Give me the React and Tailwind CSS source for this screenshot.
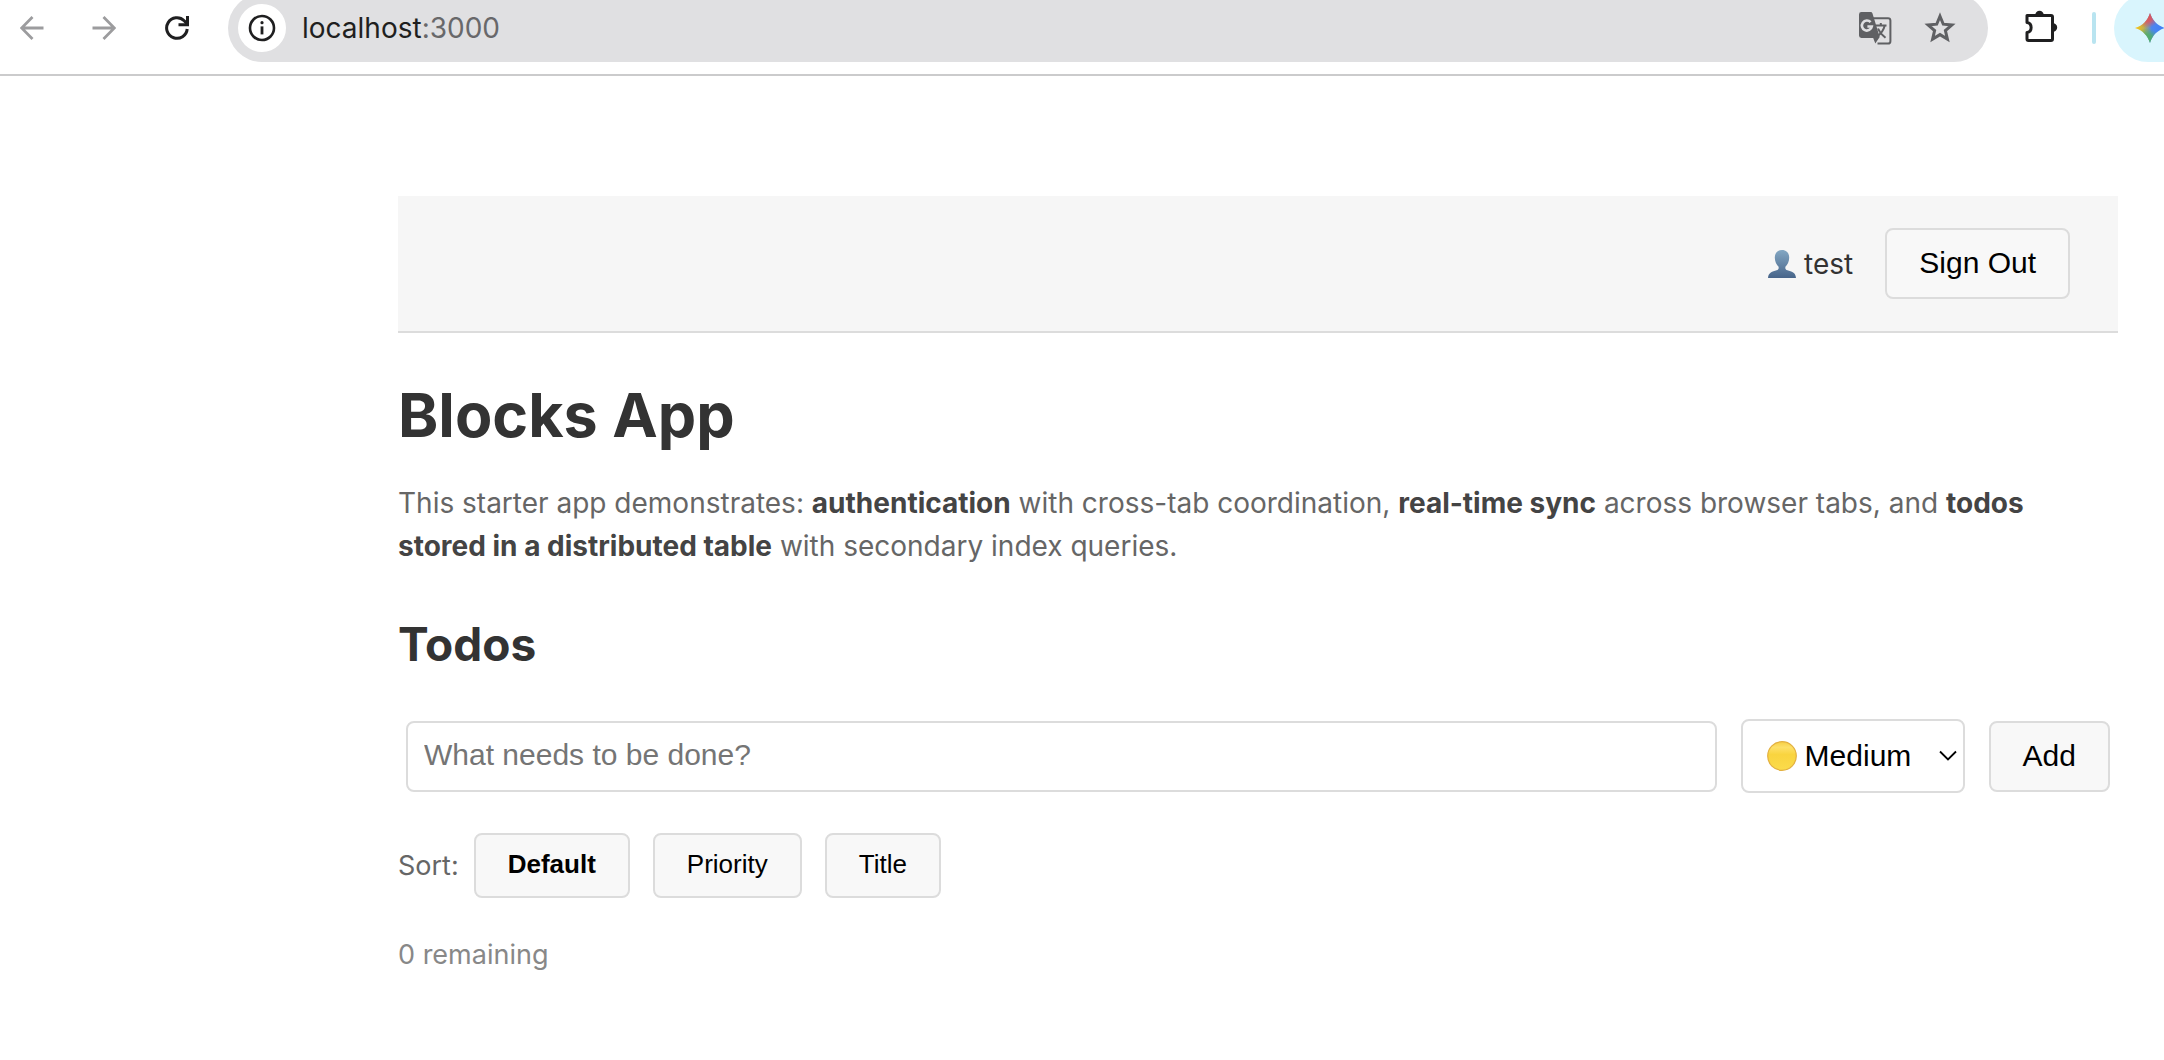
import React, { useState } from "react";

const ui = "font-['Inter',sans-serif]";
const arial = "font-['Liberation_Sans',sans-serif]";

function BackIcon() {
  return (
    <svg width="24" height="24" viewBox="0 0 24 24" fill="none" stroke="currentColor" strokeWidth="2.8">
      <path d="M23.5 12H2M12.5 1 1.6 12l10.9 11" />
    </svg>
  );
}

function ForwardIcon() {
  return (
    <svg width="24" height="24" viewBox="0 0 24 24" fill="none" stroke="currentColor" strokeWidth="2.8">
      <path d="M.5 12H22M11.5 1l10.9 11-10.9 11" />
    </svg>
  );
}

function ReloadIcon() {
  return (
    <svg width="26" height="26" viewBox="0 0 26 26" fill="none" stroke="currentColor" strokeWidth="3">
      <path d="M23.2 14a10.3 10.3 0 1 1-3-8.3L23 8.6" />
      <path d="M23.5 1v8.7h-9" />
    </svg>
  );
}

function InfoIcon() {
  return (
    <svg width="28" height="28" viewBox="0 0 28 28" fill="none">
      <circle cx="14" cy="14" r="12" stroke="currentColor" strokeWidth="2.6" />
      <path d="M14 12.4v8" stroke="currentColor" strokeWidth="2.8" />
      <circle cx="14" cy="8.7" r="1.6" fill="currentColor" />
    </svg>
  );
}

function TranslateIcon() {
  return (
    <svg width="34" height="34" viewBox="0 0 34 34" fill="none">
      <path d="M14 7.2h16a2.4 2.4 0 0 1 2.4 2.4v20.6a2.4 2.4 0 0 1-2.4 2.4H19.5" stroke="#5f6063" strokeWidth="2" />
      <path d="M3.4 1h9.2a2 2 0 0 1 1.9 1.4L21.7 26l-4.4 6.6L15.2 27H3.4A2.4 2.4 0 0 1 1 24.6V3.4A2.4 2.4 0 0 1 3.4 1Z" fill="#5f6063" />
      <path d="M12.6 11.2a5 5 0 1 0 1.2 4.3H9.400" stroke="#e0e0e2" strokeWidth="2.6" />
      <path d="M17.5 14.5h11M22.8 12v2.5M26.7 14.8c-1.2 4.600-4 8-7 10M20 17.5c1.5 3.8 4 6.500 7.5 9.300" stroke="#5f6063" strokeWidth="2" />
    </svg>
  );
}

function StarIcon() {
  return (
    <svg width="32" height="32" viewBox="0 0 32 32" fill="none" stroke="#5f6063" strokeWidth="3">
      <path d="m16 4.2 3.300 8 8.600.7-6.500 5.700 2 8.500-7.400-4.500-7.400 4.500 2-8.500-6.500-5.700 8.600-.7Z" />
    </svg>
  );
}

function PuzzleIcon() {
  return (
    <svg width="34" height="34" viewBox="0 0 34 34" fill="none">
      <path
        d="M3 6.500h24a1.500 1.500 0 0 1 1.500 1.500v22a1.500 1.500 0 0 1-1.500 1.500H4.500A1.500 1.500 0 0 1 3 30v-6.500c5.500-.8 5.500-9.200 0-10Z"
        stroke="#1f1f20"
        strokeWidth="3"
        strokeLinejoin="round"
      />
      <path d="M11.300 6a4.200 4.200 0 0 1 8.400 0ZM29 14.300a4.200 4.200 0 0 1 0 8.400Z" fill="#1f1f20" />
    </svg>
  );
}

function SparkIcon() {
  return (
    <svg width="32" height="32" viewBox="0 0 32 32" className="shrink-0">
      <defs>
        <linearGradient id="sparkBase" x1="0" y1="16" x2="32" y2="16" gradientUnits="userSpaceOnUse">
          <stop offset="0.1" stopColor="#f2c21b" />
          <stop offset="0.3" stopColor="#c0b24a" />
          <stop offset="0.55" stopColor="#4b86f0" />
          <stop offset="1" stopColor="#3f7df5" />
        </linearGradient>
        <radialGradient id="sparkTop" cx="13" cy="3" r="13" gradientUnits="userSpaceOnUse">
          <stop offset="0" stopColor="#e2504f" />
          <stop offset="0.5" stopColor="#e2555a" stopOpacity="0.85" />
          <stop offset="1" stopColor="#e2555a" stopOpacity="0" />
        </radialGradient>
        <radialGradient id="sparkBottom" cx="13" cy="29" r="13" gradientUnits="userSpaceOnUse">
          <stop offset="0" stopColor="#4fae66" />
          <stop offset="0.5" stopColor="#4fae66" stopOpacity="0.85" />
          <stop offset="1" stopColor="#4fae66" stopOpacity="0" />
        </radialGradient>
      </defs>
      {["url(#sparkBase)", "url(#sparkBottom)", "url(#sparkTop)"].map((fill) => (
        <path key={fill} fill={fill} d="M16 1c2.500 7.500 7 12.500 15 15-8 2.500-12.500 7.500-15 15-2.500-7.500-7-12.500-15-15C9 13.500 13.500 8.500 16 1Z" />
      ))}
    </svg>
  );
}

function PersonIcon() {
  return (
    <svg width="28" height="28" viewBox="0 0 28 28">
      <defs>
        <linearGradient id="person" x1="0" y1="0" x2="0" y2="1">
          <stop offset="0" stopColor="#83a7c3" />
          <stop offset="1" stopColor="#48658a" />
        </linearGradient>
      </defs>
      <path
        fill="url(#person)"
        d="M14 0c4.600 0 7.300 3.200 7.200 7.800-.1 4-1.700 7.200-3.800 8.900-.3 1.900.2 2.900 2 3.500 4.300 1.300 8.100 2 8.600 7.800H0c.5-5.800 4.300-6.500 8.600-7.800 1.800-.6 2.300-1.600 2-3.500C8.500 15 6.900 11.800 6.800 7.800 6.700 3.200 9.400 0 14 0Z"
      />
    </svg>
  );
}

function YellowDot() {
  return (
    <svg width="30" height="30" viewBox="0 0 30 30">
      <defs>
        <linearGradient id="dot" x1="0" y1="0" x2="0" y2="1">
          <stop offset="0" stopColor="#f7cf45" />
          <stop offset="0.2" stopColor="#fde069" />
          <stop offset="0.45" stopColor="#f9d43f" />
          <stop offset="1" stopColor="#fbdb4b" />
        </linearGradient>
      </defs>
      <circle cx="15" cy="15" r="14.3" fill="url(#dot)" stroke="#e3b040" strokeWidth="1.2" />
    </svg>
  );
}

function BrowserBar() {
  return (
    <div className={`${ui} h-[76px] overflow-hidden border-b-2 border-[#cbcbcc]`}>
      <div className="flex h-14 items-center">
        <nav className="flex shrink-0 items-center gap-12 pl-5 pr-[38px]">
          <button type="button" aria-label="Back" className="text-[#9c9c9e]"><BackIcon /></button>
          <button type="button" aria-label="Forward" className="text-[#9c9c9e]"><ForwardIcon /></button>
          <button type="button" aria-label="Reload" className="text-[#1f1f20]"><ReloadIcon /></button>
        </nav>
        <div className="flex h-17 flex-1 items-center rounded-full bg-[#e0e0e2] pl-2.5 pr-8">
          <button type="button" aria-label="Site information" className="flex size-12 items-center justify-center rounded-full bg-white text-[#1f1f20]">
            <InfoIcon />
          </button>
          <div className="ml-4 flex-1 text-[28px] leading-8 text-[#1f1f20]">
            localhost<span className="text-[#68686a]">:3000</span>
          </div>
          <div className="flex items-center gap-8">
            <button type="button" aria-label="Translate this page"><TranslateIcon /></button>
            <button type="button" aria-label="Bookmark this tab"><StarIcon /></button>
          </div>
        </div>
        <button type="button" aria-label="Extensions" className="ml-9 shrink-0 pb-1"><PuzzleIcon /></button>
        <div className="ml-[34px] mr-4.5 h-8 w-1 shrink-0 rounded-full bg-[#b9e4f0]" />
        <button type="button" aria-label="Gemini" className="-mr-10 flex h-17 w-[90px] shrink-0 items-center rounded-full bg-[#d9f5fd] pl-5">
          <SparkIcon />
        </button>
      </div>
    </div>
  );
}

const box = "rounded-lg border-2 border-[#dcdcdc]";

function Button({ className = "", ...props }) {
  return <button type="button" className={`${arial} ${box} bg-[#f8f8f8] px-8 pb-0.5 text-black ${className}`} {...props} />;
}

export default function App() {
  const [sort, setSort] = useState("Default");
  return (
    <div className="min-h-screen bg-white">
      <BrowserBar />
      <main className={`${ui} pl-[398px] pr-[46px] pt-30 text-[#333]`}>
        <header className="flex items-center justify-end gap-8 border-b-2 border-[#dcdcdc] bg-[#f6f6f6] px-12 py-8">
          <div className="flex items-center gap-2 text-[28px] leading-8">
            <PersonIcon />
            <span>test</span>
          </div>
          <Button className="h-[71px] text-[30px]">Sign Out</Button>
        </header>

        <h1 className="mt-[42px] text-[61px] font-bold leading-20">Blocks App</h1>
        <p className="mt-[27px] text-[28px] leading-[43px] text-[#666]">
          This starter app demonstrates: <strong className="font-bold text-[#444]">authentication</strong> with cross-tab
          coordination, <strong className="font-bold text-[#444]">real-time sync</strong> across browser tabs, and{" "}
          <strong className="font-bold text-[#444]">todos stored in a distributed table</strong> with secondary index queries.
        </p>

        <h2 className="mt-11 text-[46px] font-bold leading-16">Todos</h2>
        <form className="mt-[43px] flex items-center gap-6 px-2" onSubmit={(e) => e.preventDefault()}>
          <input
            type="text"
            aria-label="New todo"
            placeholder="What needs to be done?"
            className={`${arial} ${box} h-[71px] min-w-0 flex-1 px-4 pb-0.5 text-[30px] text-black placeholder:text-[#757575]`}
          />
          <div className="relative">
            <select
              aria-label="Priority"
              defaultValue="Medium"
              className={`${arial} ${box} block h-[74px] w-[224px] appearance-none bg-white pb-0.5 pl-[62px] text-[30px] text-black`}
            >
              <option>High</option>
              <option>Medium</option>
              <option>Low</option>
            </select>
            <span className="pointer-events-none absolute inset-y-0 left-6.5 flex items-center"><YellowDot /></span>
            <svg className="pointer-events-none absolute inset-y-0 right-2 my-auto" width="18" height="12" viewBox="0 0 18 12" fill="none" stroke="#000" strokeWidth="1.8">
              <path d="m1 1.5 8 8 8-8" />
            </svg>
          </div>
          <Button type="submit" className="h-[71px] text-[30px]">Add</Button>
        </form>

        <div className="mt-10 flex items-center gap-[23px]">
          <span className="-mr-2 text-[27px] leading-8 text-[#666]">Sort:</span>
          {["Default", "Priority", "Title"].map((name) => (
            <Button
              key={name}
              onClick={() => setSort(name)}
              aria-pressed={sort === name}
              className={`h-[65px] text-[26px] ${sort === name ? "font-bold" : ""}`}
            >
              {name}
            </Button>
          ))}
        </div>
        <p className="mt-[41px] text-[27px] leading-8 text-[#888]">0 remaining</p>
      </main>
    </div>
  );
}
